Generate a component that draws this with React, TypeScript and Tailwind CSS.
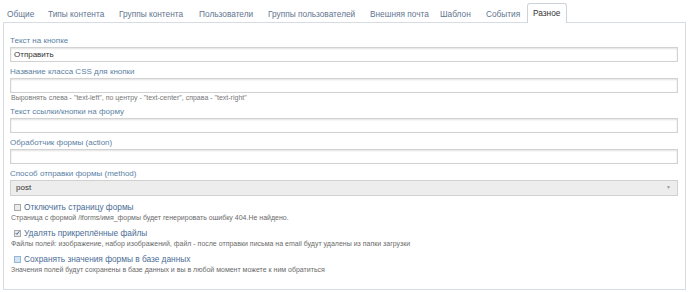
const tabs = [
  { t: 'Общие', w: 'w-[41px]' },
  { t: 'Типы контента', w: 'w-[71px]' },
  { t: 'Группы контента', w: 'w-[80px]' },
  { t: 'Пользователи', w: 'w-[69px]' },
  { t: 'Группы пользователей', w: 'w-[102px]' },
  { t: 'Внешняя почта', w: 'w-[70px]' },
  { t: 'Шаблон', w: 'w-[46px]' },
  { t: 'События', w: 'w-[47px]' },
  { t: 'Разное', w: 'w-[40px]' },
];

function Field({ label, value, help }: { label: string; value?: string; help?: string }) {
  return (
    <div className="mt-[4px]">
      <div className="text-[8px] leading-[11px] text-[#5a7fa3]">{label}</div>
      <div className="mt-[1px] h-[15px] border border-[#d2d2d2] bg-white shadow-[inset_0_1px_2px_rgba(0,0,0,0.12)] px-[3px] text-[8px] leading-[13px] text-[#333]">
        {value}
      </div>
      {help && <div className="pl-[1px] text-[7px] leading-[9px] text-[#777]">{help}</div>}
    </div>
  );
}

function Check({ label, help, state }: { label: string; help: string; state: 'off' | 'on' | 'hover' }) {
  return (
    <div className="mt-[5px]">
      <div className="flex h-[12px] items-center gap-[3px] pl-[4px]">
        <span
          className={
            state === 'hover'
              ? 'flex h-[7px] w-[7px] items-center justify-center border border-[#93b6d8] bg-[#d3e4f4]'
              : 'flex h-[7px] w-[7px] items-center justify-center border border-[#a9a9a9] bg-[#ebebeb]'
          }
        >
          {state === 'on' && (
            <svg viewBox="0 0 8 8" className="h-[6px] w-[6px]">
              <path d="M1 4l2 2.2 4-5" fill="none" stroke="#3b5f96" strokeWidth="1.5" />
            </svg>
          )}
        </span>
        <span className="text-[8.3px] leading-[12px] text-[#4a6d95]">{label}</span>
      </div>
      <div className="pl-[1px] text-[7px] leading-[9px] text-[#6a6a6a]">{help}</div>
    </div>
  );
}

export default function App() {
  return (
    <div className="w-[690px] h-[292px] bg-white pt-[3px] font-['Liberation_Sans',Arial,sans-serif]">
      <ul className="flex h-[19px] items-start pl-[1px]">
        {tabs.map(({ t, w }) =>
          t === 'Разное' ? (
            <li
              key={t}
              className={`${w} relative z-10 h-[20px] shrink-0 rounded-t-[3px] border border-b-0 border-[#cdd3d9] bg-white pl-[5px] text-[8.3px] leading-[19px] text-[#333]`}
            >
              {t}
            </li>
          ) : (
            <li key={t} className={`${w} h-[19px] shrink-0 pl-[6px] pt-[2px] text-[8.3px] leading-[18px] text-[#5f7590]`}>
              {t}
            </li>
          )
        )}
      </ul>
      <div className="ml-[3px] mr-[4px] h-[268px] border border-[#d6dce2] pl-[6px] pr-[7px] pt-[8px]">
        <Field label="Текст на кнопке" value="Отправить" />
        <Field
          label="Название класса CSS для кнопки"
          help={'Выровнять слева - "text-left", по центру - "text-center", справа - "text-right"'}
        />
        <Field label="Текст ссылки/кнопки на форму" />
        <Field label="Обработчик формы (action)" />
        <div className="mt-[4px]">
          <div className="text-[8px] leading-[11px] text-[#5a7fa3]">Способ отправки формы (method)</div>
          <div className="mt-[1px] flex h-[16px] items-center justify-between border border-[#d0d0d0] bg-[#ededed] pl-[5px] pr-[6px] text-[8px] text-[#333]">
            <span>post</span>
            <span className="text-[5px] text-[#999]">▼</span>
          </div>
        </div>
        <Check
          state="off"
          label="Отключить страницу формы"
          help="Страница с формой /iforms/имя_формы будет генерировать ошибку 404.Не найдено."
        />
        <Check
          state="on"
          label="Удалять прикреплённые файлы"
          help="Файлы полей: изображение, набор изображений, файл - после отправки письма на email будут удалены из папки загрузки"
        />
        <Check
          state="hover"
          label="Сохранять значения формы в базе данных"
          help="Значения полей будут сохранены в базе данных и вы в любой момент можете к ним обратиться"
        />
      </div>
    </div>
  );
}
